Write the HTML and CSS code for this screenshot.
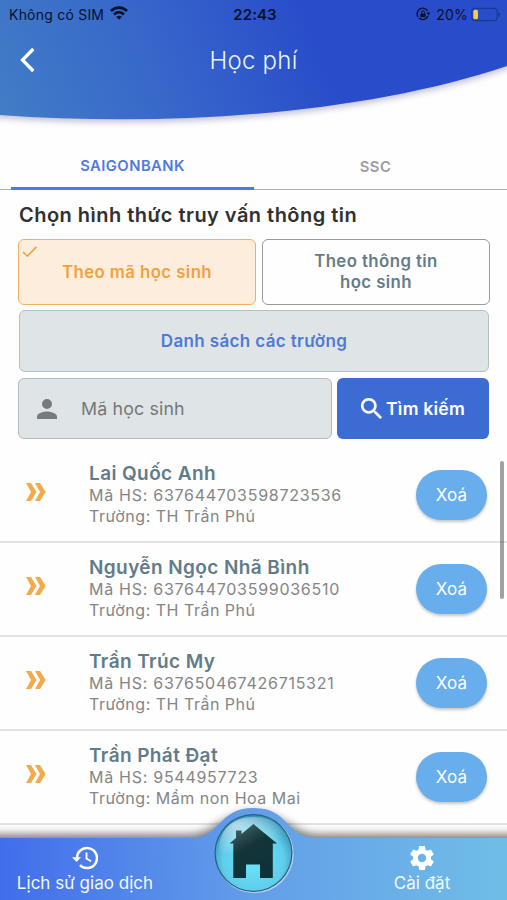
FILE: index.html
```html
<!DOCTYPE html>
<html lang="vi">
<head>
<meta charset="utf-8">
<title>Học phí</title>
<link rel="stylesheet" href="styles.css">
</head>
<body>
<div class="app">
  <header class="header">
    <svg class="header-bg" viewBox="0 0 507 136" aria-hidden="true">
      <defs>
        <linearGradient id="head" gradientUnits="userSpaceOnUse" x1="0" y1="110" x2="295" y2="-10">
          <stop offset="0" stop-color="#427cc6"/><stop offset=".5" stop-color="#3767ca"/><stop offset="1" stop-color="#294dca"/>
        </linearGradient>
        <filter id="headShadow" x="-10%" y="-10%" width="120%" height="130%"><feGaussianBlur stdDeviation="3"/></filter>
      </defs>
      <path d="M-20 0V117L0 118C180 131 370 115 507 69L530 60V0Z" fill="#453a80" opacity=".32" filter="url(#headShadow)"/>
      <path d="M0 0V115C180 128 370 112 507 66V0Z" fill="url(#head)"/>
    </svg>
    <div class="status">
      <div class="carrier"><span>Không có SIM</span>
        <svg width="18" height="14" viewBox="0 0 18 14" fill="none" stroke="#07112e" stroke-width="2.700"><path d="M.9 5C5.500.4 12.500.4 17.100 5M4 8.500c2.900-2.800 7.100-2.800 10 0"/><path d="M9 13.700l-2.800-2.900q2.800-2.300 5.600 0z" fill="#07112e" stroke="none"/></svg>
      </div>
      <div class="clock">22:43</div>
      <div class="power">
        <svg width="14" height="14" viewBox="0 0 14 14" fill="none" stroke="#07112e"><path d="M2 9.800A5.500 5.500 0 0 1 11.500 3.800M12 9A5.500 5.500 0 0 1 3 11" stroke-width="1.400"/><path d="M10.500 5.500h3.500l-1.300 3z" fill="#07112e" stroke="none"/><path d="M4.400 6.500h5.200v3.700H4.400z" fill="#07112e" stroke="none"/><path d="M5.500 6.500V5.300a1.500 1.500 0 0 1 3 0v1.200"/></svg>
        <span>20%</span>
        <svg width="30" height="15" viewBox="0 0 30 15"><rect x=".8" y="1.300" width="25.400" height="12.400" rx="3.500" fill="none" stroke="#193a91" stroke-width="1.200"/><rect x="2.300" y="2.800" width="4.700" height="9.400" rx="1.600" fill="#f8cb4d"/><path d="M27.300 5.200c2.500 1 2.500 3.600 0 4.600z" fill="#193a91"/></svg>
      </div>
    </div>
    <div class="titlebar">
      <svg class="back" width="18" height="26" viewBox="0 0 18 26"><path d="M15.300 2L4.500 13l10.800 11" fill="none" stroke="#fff" stroke-width="3.300"/></svg>
      <h1>Học phí</h1>
    </div>
  </header>
  <nav class="tabs"><div class="tab active">SAIGONBANK</div><div class="tab">SSC</div></nav>
  <main class="search">
    <h2>Chọn hình thức truy vấn thông tin</h2>
    <div class="modes">
      <div class="mode chosen"><svg class="tick" width="16" height="13" viewBox="0 0 16 13"><path d="M1 6l4.300 4L14.500.8" fill="none" stroke="#f2a43f" stroke-width="1.700"/></svg><span>Theo mã học sinh</span></div>
      <div class="mode"><span>Theo thông tin<br>học sinh</span></div>
    </div>
    <div class="schools"><span>Danh sách các trường</span></div>
    <div class="query">
      <div class="field"><svg width="20" height="20" viewBox="4 4 16 16"><path fill="#777b7c" d="M12 12a4 4 0 1 0 0-8 4 4 0 0 0 0 8zm0 2c-2.700 0-8 1.300-8 4v2h16v-2c0-2.700-5.300-4-8-4z"/></svg><span>Mã học sinh</span></div>
      <div class="submit"><svg width="21" height="21" viewBox="3 3 17.500 17.500"><path fill="#fff" stroke="#fff" stroke-width=".2" d="M15.500 14h-.79l-.28-.27A6.500 6.500 0 1 0 13.730 14.430l.27.280v.79l5 4.990L20.490 19zm-6 0a4.500 4.500 0 1 1 0-9 4.500 4.500 0 0 1 0 9z"/></svg><span>Tìm kiếm</span></div>
    </div>
  </main>
  <section class="list">
    <div class="student"><svg class="chevrons" viewBox="0 0 20 18"><path d="M0 0h5l5.500 9L5 18H0l5-9zM9 0h5l5.700 9L14 18H9l5-9z"/></svg><div class="info"><h3>Lai Quốc Anh</h3><p class="code">Mã HS: 637644703598723536</p><p>Trường: TH Trần Phú</p></div><div class="delete">Xoá</div></div>
    <div class="student"><svg class="chevrons" viewBox="0 0 20 18"><path d="M0 0h5l5.500 9L5 18H0l5-9zM9 0h5l5.700 9L14 18H9l5-9z"/></svg><div class="info"><h3>Nguyễn Ngọc Nhã Bình</h3><p class="code">Mã HS: 637644703599036510</p><p>Trường: TH Trần Phú</p></div><div class="delete">Xoá</div></div>
    <div class="student"><svg class="chevrons" viewBox="0 0 20 18"><path d="M0 0h5l5.500 9L5 18H0l5-9zM9 0h5l5.700 9L14 18H9l5-9z"/></svg><div class="info"><h3>Trần Trúc My</h3><p class="code">Mã HS: 637650467426715321</p><p>Trường: TH Trần Phú</p></div><div class="delete">Xoá</div></div>
    <div class="student"><svg class="chevrons" viewBox="0 0 20 18"><path d="M0 0h5l5.500 9L5 18H0l5-9zM9 0h5l5.700 9L14 18H9l5-9z"/></svg><div class="info"><h3>Trần Phát Đạt</h3><p class="code">Mã HS: 9544957723</p><p>Trường: Mầm non Hoa Mai</p></div><div class="delete">Xoá</div></div>
    <div class="scrollbar"></div>
  </section>
  <footer class="footer">
    <svg class="footer-bg" viewBox="0 0 507 100" aria-hidden="true">
      <defs>
        <linearGradient id="foot" gradientUnits="userSpaceOnUse" x1="0" y1="70" x2="490" y2="40"><stop offset="0" stop-color="#416deb"/><stop offset=".5" stop-color="#629de9"/><stop offset="1" stop-color="#6fbce7"/></linearGradient>
        <radialGradient id="orb" cx=".5" cy=".6" r=".58"><stop offset="0" stop-color="#6ce5fb"/><stop offset=".7" stop-color="#5fcdeb"/><stop offset="1" stop-color="#3493b8"/></radialGradient>
        <radialGradient id="shine" cx=".25" cy=".2" r=".75"><stop offset="0" stop-color="#fff" stop-opacity=".6"/><stop offset="1" stop-color="#fff" stop-opacity="0"/></radialGradient>
        <linearGradient id="house" x1="0" y1="0" x2=".5" y2="1"><stop offset="0" stop-color="#4a6d75"/><stop offset=".5" stop-color="#15343a"/><stop offset="1" stop-color="#0d3238"/></linearGradient>
        <filter id="footShadow" x="-10%" y="-20%" width="120%" height="140%"><feGaussianBlur stdDeviation="4"/></filter>
      </defs>
      <path d="M-20 34H185C213 36 223 12 253.500 12S294 36 322 34H530V100H-20Z" fill="#000" opacity=".5" filter="url(#footShadow)"/>
      <path d="M0 38H190C222 38 217 8 253.500 8S285 38 317 38H507V100H0Z" fill="url(#foot)"/>
      <circle cx="254.500" cy="54" r="39.200" fill="#b6cfee"/>
      <circle cx="253.500" cy="53" r="39" fill="#25617f"/>
      <circle cx="253.500" cy="53" r="37.800" fill="url(#orb)"/>
      <path d="M220 58C216 33 230 17 253.500 17S284 29 288 43C264 38 241 44 220 58Z" fill="url(#shine)"/>
      <path d="M253.500 24L277 43.500H272.800V78H260V64.500H246V78H233.300V43.500H229.500L236 38V30.500H241.500V34Z" fill="url(#house)"/>
    </svg>
    <div class="item history"><svg width="26" height="24" viewBox="0 0 26 24" fill="none" stroke="#fff"><path d="M5 12A10 10 0 1 1 8 19.200" stroke-width="2.500"/><path d="M0 11.300h9L4.500 16z" fill="#fff" stroke="none"/><path d="M14.500 6.500v6l4.500 2.800" stroke-width="1.900"/></svg><span>Lịch sử giao dịch</span></div>
    <div class="item settings"><svg width="24" height="24" viewBox="2 2 20 20"><path fill="#fff" d="M19.430 12.980c.04-.32.070-.64.070-.98s-.03-.66-.07-.98l2.110-1.650c.19-.15.240-.42.120-.64l-2-3.460c-.12-.22-.39-.3-.61-.22l-2.490 1c-.52-.4-1.080-.73-1.690-.98l-.38-2.650A.49.490 0 0 0 14 2h-4c-.25 0-.46.180-.49.420l-.38 2.650c-.61.250-1.170.590-1.690.98l-2.490-1c-.23-.09-.49 0-.61.220l-2 3.460c-.13.220-.07.490.120.640l2.110 1.650c-.04.320-.07.650-.07.980s.03.660.070.980l-2.110 1.650c-.19.150-.24.420-.12.640l2 3.460c.12.220.39.300.61.220l2.490-1c.52.400 1.080.730 1.690.98l.38 2.650c.03.240.24.420.49.420h4c.25 0 .46-.18.490-.42l.38-2.650c.61-.25 1.170-.59 1.690-.98l2.490 1c.23.090.49 0 .61-.22l2-3.460c.12-.22.070-.49-.12-.64zM12 15.500a3.500 3.500 0 1 1 0-7 3.500 3.500 0 0 1 0 7z"/></svg><span>Cài đặt</span></div>
  </footer>
</div>
</body>
</html>
```
FILE: styles.css
```css
* { box-sizing: border-box; }
body { margin: 0; background: #fefefe; font-family: Inter, "Liberation Sans", sans-serif; }
h1, h2, h3, p { margin: 0; white-space: nowrap; }
svg { display: block; flex: none; }
.app { width: 507px; height: 900px; position: relative; overflow: hidden; display: flex; flex-direction: column; }
.header { position: relative; height: 144px; flex: none; }
.header-bg { position: absolute; left: 0; top: 0; width: 507px; height: 136px; }
.status { position: relative; height: 28px; padding: 0 6px 0 9px; display: grid; grid-template-columns: 1fr auto 1fr; align-items: center; color: #07112e; font-size: 14px; }
.carrier, .power { display: flex; align-items: center; white-space: nowrap; }
.carrier { gap: 6px; letter-spacing: .22px; }
.carrier svg { margin-top: -2px; }
.clock { font-weight: 600; font-size: 15px; letter-spacing: .1px; }
.power { justify-content: flex-end; }
.power span { margin: 0 3px 0 6px; letter-spacing: .2px; }
.titlebar { position: relative; height: 64px; display: grid; grid-template-columns: 80px 1fr 80px; align-items: center; }
.back { margin-left: 18px; }
h1 { color: #e9f2ff; font-weight: 300; font-size: 24px; letter-spacing: .25px; text-align: center; }
.tabs { height: 46px; flex: none; padding: 0 10px 0 11px; display: grid; grid-template-columns: 243px 243px; background: linear-gradient(#aab0b4, #aab0b4) 0 45px / 100% 1px no-repeat; }
.tab { display: flex; align-items: center; justify-content: center; color: #9c9d9f; font-size: 14.800px; font-weight: 600; letter-spacing: .45px; border-bottom: 3px solid transparent; padding-top: 3px; }
.tab.active { color: #5079df; border-color: #487be5; padding-top: 1px; }
.search { padding: 10px 17px 0 18px; flex: none; }
h2 { color: #303030; font-weight: 600; font-size: 20px; line-height: 30px; letter-spacing: .47px; margin-left: 1px; }
.modes { display: grid; grid-template-columns: 238px 228px; gap: 6px; margin-top: 9px; }
.mode { position: relative; height: 66px; border: 1.500px solid #969a9c; border-radius: 6px; display: flex; align-items: center; justify-content: center; text-align: center; font-size: 16.800px; line-height: 21px; font-weight: 600; letter-spacing: .42px; color: #647c89; }
.mode.chosen { background: #fdeddd; border-color: #efb064; color: #f2a13d; }
.tick { position: absolute; left: 3px; top: 6px; }
.schools { margin: 5px 1px 0 1px; height: 62px; border: 1.500px solid #b4bfc4; border-radius: 6px; background: #dfe4e7; display: flex; align-items: center; justify-content: center; color: #5079d6; font-weight: 600; font-size: 17px; letter-spacing: .36px; padding-bottom: 1px; }
.query { margin-top: 6px; display: grid; grid-template-columns: 314px 152px; gap: 5px; }
.field { height: 61px; display: flex; align-items: center; gap: 24px; padding-left: 18px; background: #dfe4e7; border: 1.500px solid #b4bbc0; border-radius: 6px; color: #747778; font-size: 17.800px; letter-spacing: .15px; }
.submit { height: 61px; border-radius: 6px; background: #3d6bd4; display: flex; align-items: center; justify-content: center; gap: 4px; color: #fff; font-weight: 600; font-size: 17.600px; letter-spacing: .2px; }
.list { position: relative; margin-top: 10px; }
.student { height: 94px; padding: 0 20px 0 26px; border-bottom: 2px solid #e2e2e2; display: grid; grid-template-columns: 20px 1fr 71px; column-gap: 43px; align-items: center; }
.chevrons { width: 20px; height: 18px; margin-top: -7px; fill: #f2ab4c; }
.info { padding-bottom: 1px; }
h3 { color: #617b89; font-size: 19px; line-height: 22px; font-weight: 600; letter-spacing: .4px; }
.info p { color: #858585; font-size: 16px; line-height: 21px; letter-spacing: .5px; }
.info .code { letter-spacing: .72px; }
.delete { height: 50px; border-radius: 25px; background: #68adec; box-shadow: 0 2px 3px rgba(0,0,0,.22); color: #fff; font-size: 17px; letter-spacing: .2px; display: flex; align-items: center; justify-content: center; }
.scrollbar { position: absolute; right: 3px; top: 12px; width: 4px; height: 138px; border-radius: 2px; background: rgba(70,70,70,.5); }
.footer { position: absolute; left: 0; bottom: 0; width: 507px; height: 100px; padding: 46px 0 0; display: grid; grid-template-columns: 170px 167px 170px; }
.footer-bg { position: absolute; inset: 0; width: 507px; height: 100px; }
.item { position: relative; display: flex; flex-direction: column; align-items: center; color: #f2faff; font-size: 17px; line-height: 22px; gap: 2px; letter-spacing: .02px; white-space: nowrap; }
.settings { grid-column: 3; }
```
